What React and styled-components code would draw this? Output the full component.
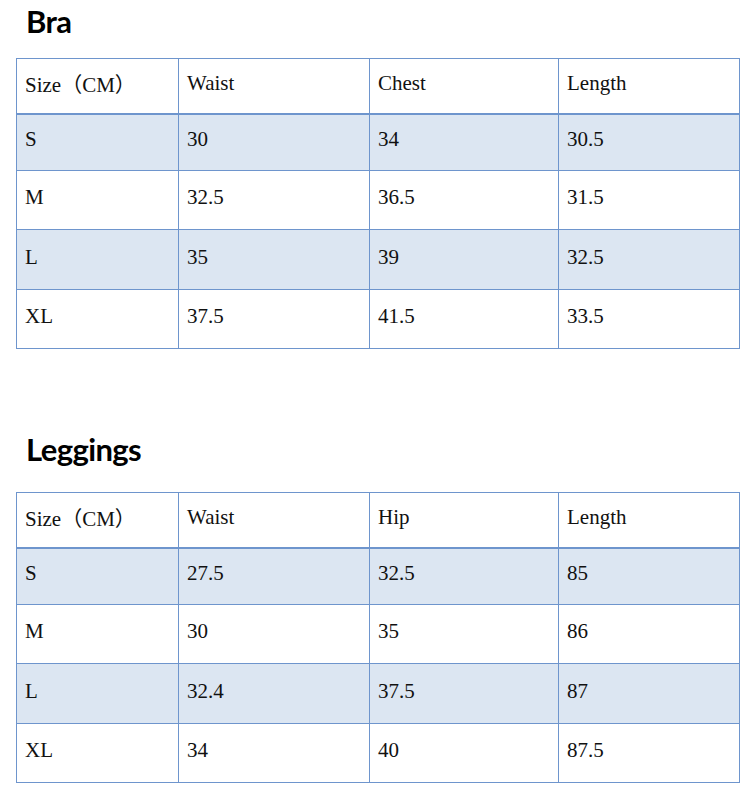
import React from "react";
import styled, { createGlobalStyle } from "styled-components";

const Global = createGlobalStyle`
  html, body { margin: 0; padding: 0; background: #ffffff; }
  body { font-family: "Liberation Serif", "Noto Sans CJK SC", serif; color: #000; }
`;

const Page = styled.div`
  width: 750px;
  padding: 0 0 0 16px;
  box-sizing: border-box;
`;

const Section = styled.section`
  padding-top: ${(p) => p.$top}px;
`;

const Title = styled.h2`
  margin: 0;
  font-family: "Lato", "Open Sans", sans-serif;
  font-weight: 700;
  font-size: 31px;
  letter-spacing: -0.6px;
  line-height: 36px;
  padding-left: 10px;
  height: ${(p) => p.$h}px;
  color: #000;
`;

const Table = styled.table`
  border-collapse: collapse;
  width: 723px;
  table-layout: fixed;
  font-family: "Liberation Serif", "Noto Sans CJK SC", serif;
  font-size: 21px;
  color: #111;
`;

const Row = styled.tr`
  height: ${(p) => p.$h}px;
  background: ${(p) => (p.$shaded ? "#dce6f2" : "#ffffff")};
`;

const Cell = styled.td`
  border: 1px solid #6e95cd;
  border-bottom-width: ${(p) => (p.$head ? 2 : 1)}px;
  padding: 0 0 5px 8px;
  vertical-align: middle;
  white-space: nowrap;
`;

const cols = [162, 191, 189, 181];
const heights = [55, 57, 59, 60, 59];

const SizeTable = ({ header, rows }) => (
  <Table>
    <colgroup>
      {cols.map((w, i) => (
        <col key={i} style={{ width: w }} />
      ))}
    </colgroup>
    <tbody>
      <Row $h={heights[0]}>
        {header.map((h) => (
          <Cell key={h} $head>
            {h}
          </Cell>
        ))}
      </Row>
      {rows.map((r, i) => (
        <Row key={r[0]} $h={heights[i + 1]} $shaded={i % 2 === 0}>
          {r.map((c, j) => (
            <Cell key={j}>{c}</Cell>
          ))}
        </Row>
      ))}
    </tbody>
  </Table>
);

export default function App() {
  return (
    <Page>
      <Global />
      <Section $top={3}>
        <Title $h={55}>Bra</Title>
        <SizeTable
          header={["Size（CM）", "Waist", "Chest", "Length"]}
          rows={[
            ["S", "30", "34", "30.5"],
            ["M", "32.5", "36.5", "31.5"],
            ["L", "35", "39", "32.5"],
            ["XL", "37.5", "41.5", "33.5"],
          ]}
        />
      </Section>
      <Section $top={82}>
        <Title $h={61}>Leggings</Title>
        <SizeTable
          header={["Size（CM）", "Waist", "Hip", "Length"]}
          rows={[
            ["S", "27.5", "32.5", "85"],
            ["M", "30", "35", "86"],
            ["L", "32.4", "37.5", "87"],
            ["XL", "34", "40", "87.5"],
          ]}
        />
      </Section>
    </Page>
  );
}
